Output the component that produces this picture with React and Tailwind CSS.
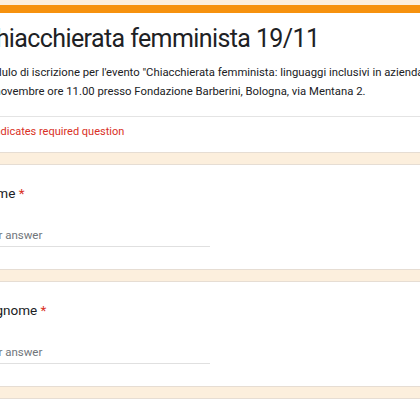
export default function App() {
  return (
    <div className="h-[420px] w-[420px] overflow-hidden bg-[#fcefdd] font-['Roboto',sans-serif] text-[#202124]">
      <div className="-ml-[46px] flex w-[680px] flex-col gap-[11px] pt-[5px]">
        <div className="rounded-lg border-x border-b border-[#e6ddd3] bg-white">
          <div className="h-[8px] rounded-t-lg bg-[#f6920e]" />
          <div className="border-b border-[#e4e4e4] px-6 pb-[15px] pt-[10px]">
            <h1 className="ml-[1px] whitespace-nowrap text-[25px] leading-[32px] tracking-[-0.6px]">
              Chiacchierata femminista 19/11
            </h1>
            <div className="mt-[8px] whitespace-nowrap text-[11.3px] leading-[19px]">
              <p>Modulo di iscrizione per l'evento "Chiacchierata femminista: linguaggi inclusivi in azienda" del</p>
              <p>19 novembre ore 11.00 presso Fondazione Barberini, Bologna, via Mentana 2.</p>
            </div>
          </div>
          <div className="pb-[10px] pl-[29px] pr-6 pt-[5px] text-[11px] leading-[20px] text-[#d93025]">
            * Indicates required question
          </div>
        </div>

        <Question label="Nome" />
        <Question label="Cognome" />

        <div className="h-[40px] rounded-lg border border-[#e6ddd3] bg-white" />
      </div>
    </div>
  );
}

function Question({ label }) {
  return (
    <div className="rounded-lg border border-[#e6ddd3] bg-white px-6 pb-[22px] pt-[16px]">
      <div className="text-[13.5px] leading-[24px]">
        {label} <span className="text-[#d93025]">*</span>
      </div>
      <div className="mt-[19px] w-[231px] border-b border-[#e0e0e0] text-[11.5px] leading-[22px] text-[#70757a]">
        Your answer
      </div>
    </div>
  );
}
